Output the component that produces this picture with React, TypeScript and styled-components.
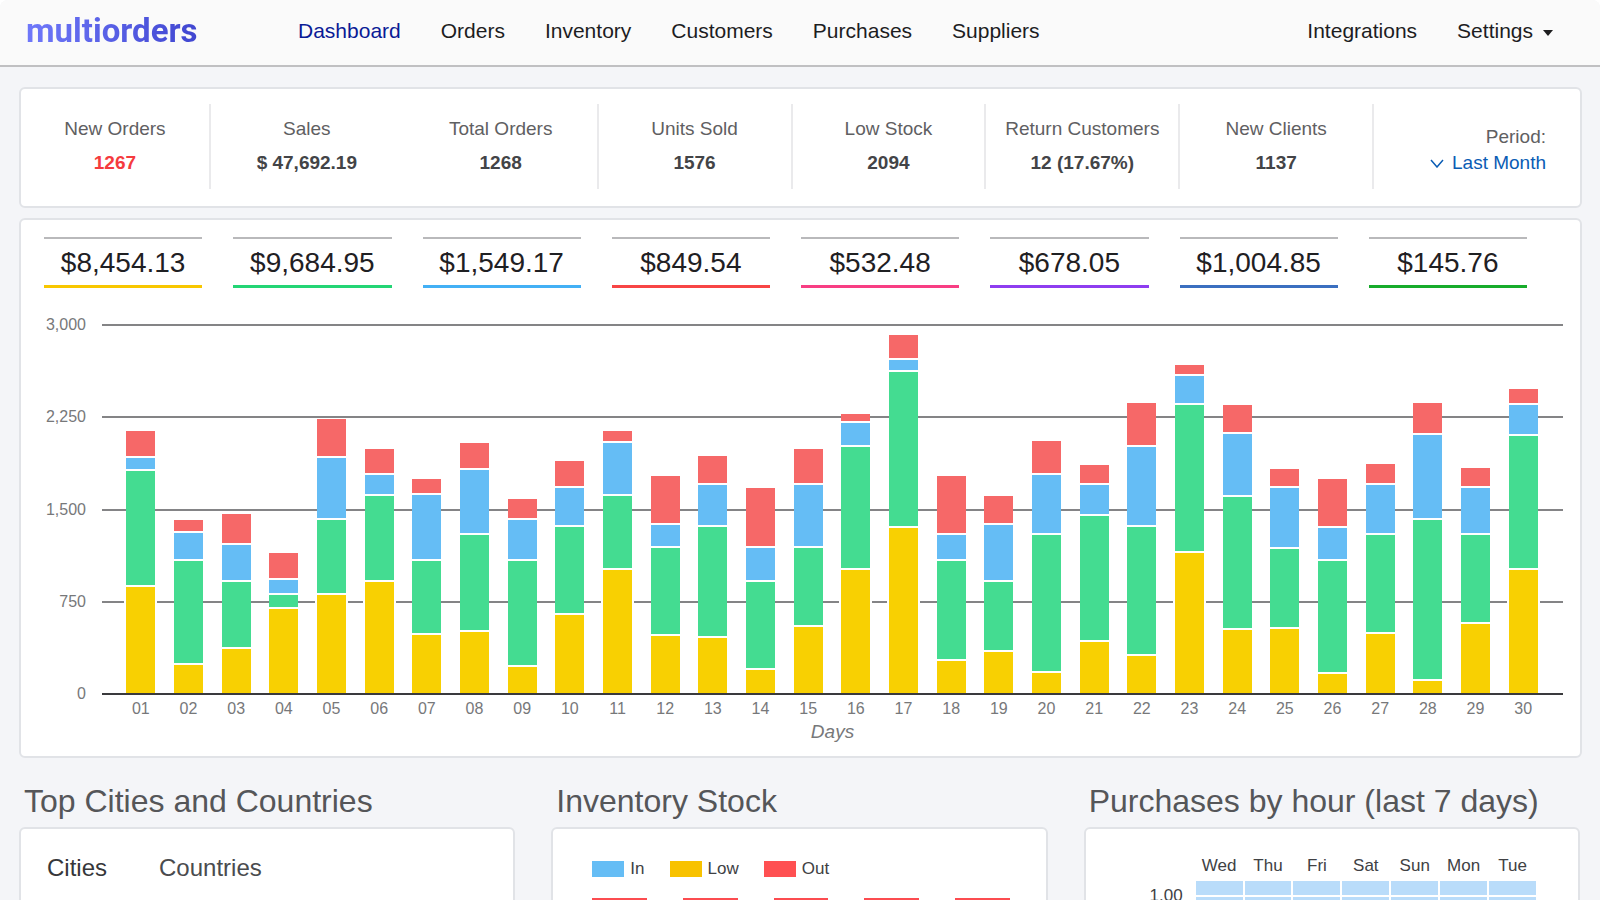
import React from "react";
import styled, { createGlobalStyle } from "styled-components";

const COLORS = {
  yellow: "#f8d002",
  green: "#44dc91",
  blue: "#65bdf5",
  red: "#f66868",
};

const GlobalStyle = createGlobalStyle`
  *, *::before, *::after { box-sizing: border-box; }
  html { background: #ffffff; }
  body {
    margin: 0;
    font-family: "Liberation Sans", Arial, Helvetica, sans-serif;
    color: #404144;
  }
  button, select { font: inherit; color: inherit; background: none; border: 0; padding: 0; margin: 0; cursor: pointer; }
  a { color: inherit; text-decoration: none; }
`;

const Page = styled.div`
  height: 100vh;
  overflow: hidden;
  background: #f4f5f8;
  border-radius: 8px 8px 0 0;
`;

const Header = styled.header`
  display: flex;
  align-items: center;
  height: 67px;
  padding: 0 47px 4px 26px;
  background: #fafafa;
  border-bottom: 2px solid #c0c0c2;
`;

const Logo = styled.a`
  flex: 0 0 272px;
  font: 700 33px/40px Roboto, sans-serif;
  span {
    background: linear-gradient(90deg, #6f78fa, #4046d0);
    background-clip: text;
    -webkit-background-clip: text;
    color: transparent;
  }
`;

const Nav = styled.nav<{ $end?: boolean }>`
  display: flex;
  align-items: center;
  gap: 40px;
  margin-left: ${(p) => (p.$end ? "auto" : "0")};
  font-size: 21px;
  line-height: 24px;
`;

const NavLink = styled.a<{ $active?: boolean }>`
  color: ${(p) => (p.$active ? "#0a1a96" : "#1d1d1f")};
`;

const NavButton = styled.button`
  display: flex;
  align-items: center;
  gap: 10px;
  color: #1d1d1f;
  svg { margin-top: 4px; }
`;

const Main = styled.main`
  padding: 20px 18px 0 19px;
`;

const Card = styled.section`
  background: #ffffff;
  border: 2px solid #e1e3e7;
  border-radius: 6px;
`;

const StatsCard = styled(Card)`
  display: grid;
  grid-template-columns: 190fr repeat(6, 194fr) 206fr;
  padding: 15px 0 17px;
`;

const Stat = styled.div<{ $divided?: boolean }>`
  display: flex;
  flex-direction: column;
  align-items: center;
  gap: 10px;
  height: 85px;
  padding-top: 13px;
  border-right: 2px solid ${(p) => (p.$divided ? "#eaeaec" : "transparent")};
  white-space: nowrap;
`;

const StatLabel = styled.span`
  font-size: 19px;
  line-height: 24px;
  color: #5f6062;
`;

const StatValue = styled.strong<{ $alert?: boolean }>`
  font-size: 19px;
  line-height: 24px;
  color: ${(p) => (p.$alert ? "#f53b3e" : "#434447")};
`;

const Period = styled.div`
  display: flex;
  flex-direction: column;
  align-items: flex-end;
  gap: 2px;
  padding: 21px 34px 0 0;
  font-size: 19px;
  line-height: 24px;
  label { color: #5f6062; }
`;

const PeriodPicker = styled.div`
  display: flex;
  align-items: center;
  gap: 8px;
  color: #0a5cb4;
  select { appearance: none; outline: 0; }
`;

const ChartCard = styled(Card)`
  margin-top: 10px;
  padding: 17px 17px 12px 23px;
`;

const Totals = styled.div`
  display: grid;
  grid-template-columns: repeat(8, 1fr);
  gap: 31px;
  padding-right: 36px;
`;

const Total = styled.div<{ $color: string }>`
  padding-top: 2px;
  border-top: 2px solid #b9b9bb;
  border-bottom: 3px solid ${(p) => p.$color};
  font-size: 28px;
  line-height: 44px;
  text-align: center;
  color: #1f2023;
`;

const Chart = styled.div`
  display: grid;
  grid-template-columns: 42px 1fr;
  column-gap: 16px;
  margin-top: 36px;
  font-size: 16px;
  line-height: 20px;
  color: #77787a;
`;

const ScaleY = styled.div`
  display: flex;
  flex-direction: column;
  justify-content: space-between;
  margin: -9px 0;
  text-align: right;
`;

const Plot = styled.div`
  display: grid;
  height: 371px;
  > * { grid-area: 1 / 1; }
`;

const GridLines = styled.div`
  display: flex;
  flex-direction: column;
  justify-content: space-between;
  > i { height: 2px; background: #848486; }
`;

const Columns = styled.div`
  display: grid;
  grid-template-columns: repeat(30, 1fr);
  align-items: end;
  justify-items: center;
  padding: 0 16px 0 15px;
`;

const Bars = styled(Columns)`
  border-bottom: 2px solid #3a3a3d;
`;

const Bar = styled.div`
  width: 29px;
  display: flex;
  flex-direction: column-reverse;
`;

const Segment = styled.div<{ $color: string; $halo?: boolean }>`
  background: ${(p) => p.$color};
  box-shadow: ${(p) => (p.$halo ? "-2px 0 #ffffff, 2px 0 #ffffff" : "none")};
`;

const Seam = styled.div`
  height: 2px;
  background: #ffffff;
`;

const ScaleX = styled(Columns)`
  grid-column: 2;
  padding-top: 4px;
`;

const AxisTitle = styled.div`
  grid-column: 2;
  margin-top: 1px;
  font-size: 19px;
  line-height: 24px;
  font-style: italic;
  text-align: center;
`;

const Panels = styled.div`
  display: grid;
  grid-template-columns: repeat(3, 1fr);
  gap: 36px;
  margin: 25px 2px 0 0;
`;

const PanelTitle = styled.h2`
  margin: 0 0 8px 5px;
  font-size: 32px;
  line-height: 36px;
  font-weight: 400;
  color: #555659;
  white-space: nowrap;
`;

const PanelCard = styled(Card)`
  min-height: 220px;
`;

const Tabs = styled.div`
  display: flex;
  gap: 52px;
  padding: 25px 26px;
`;

const Tab = styled.button<{ $active?: boolean }>`
  font-size: 24px;
  line-height: 28px;
  color: ${(p) => (p.$active ? "#36373a" : "#4a4b4e")};
`;

const Legend = styled.div`
  display: flex;
  gap: 25px;
  padding: 30px 39px 0;
  font-size: 17px;
  line-height: 20px;
`;

const LegendItem = styled.span<{ $color: string }>`
  display: flex;
  align-items: center;
  gap: 6px;
  &::before {
    content: "";
    width: 32px;
    height: 16px;
    background: ${(p) => p.$color};
  }
`;

const StockBars = styled.div`
  display: grid;
  grid-template-columns: repeat(5, 1fr);
  gap: 36px;
  padding: 19px 36px 0 39px;
  > i { height: 120px; background: #fc4c50; }
`;

const HeatMap = styled.table`
  width: calc(100% - 88px);
  margin: 25px 0 0 48px;
  table-layout: fixed;
  border-spacing: 2px;
  border-collapse: separate;
  font-size: 17px;
  line-height: 20px;
  th { padding: 0; font-weight: 400; }
  thead th { padding-bottom: 3px; }
  thead th:first-child { width: 58px; }
  tbody th { text-align: right; padding-right: 11px; vertical-align: middle; }
  td { height: 14px; padding: 0; background: #b9dcfa; }
`;

const stats = [
  { label: "New Orders", value: "1267", alert: true, divided: true },
  { label: "Sales", value: "$ 47,692.19" },
  { label: "Total Orders", value: "1268", divided: true },
  { label: "Units Sold", value: "1576", divided: true },
  { label: "Low Stock", value: "2094", divided: true },
  { label: "Return Customers", value: "12 (17.67%)", divided: true },
  { label: "New Clients", value: "1137", divided: true },
];

const totals = [
  ["$8,454.13", "#f8c700"],
  ["$9,684.95", "#23d575"],
  ["$1,549.17", "#43b0f5"],
  ["$849.54", "#f84545"],
  ["$532.48", "#f83e83"],
  ["$678.05", "#8e3df0"],
  ["$1,004.85", "#3b6fc0"],
  ["$145.76", "#17ac2b"],
];

// Top edge of each stacked part, in pixels above the centre of the axis line.
const days = [
  [107, 223, 236, 263], [29, 133, 161, 174], [45, 112, 149, 180],
  [85, 99, 114, 141], [99, 174, 236, 275], [112, 198, 219, 245],
  [59, 133, 199, 215], [62, 159, 224, 251], [27, 133, 174, 195],
  [79, 167, 206, 233], [124, 198, 251, 263], [58, 146, 169, 218],
  [56, 167, 209, 238], [24, 112, 146, 206], [67, 146, 209, 245],
  [124, 247, 271, 280], [166, 322, 334, 359], [33, 133, 159, 218],
  [42, 112, 169, 198], [21, 159, 219, 253], [52, 178, 209, 229],
  [38, 167, 247, 291], [141, 289, 318, 329], [64, 197, 260, 289],
  [65, 145, 206, 225], [20, 133, 166, 215], [60, 159, 209, 230],
  [13, 174, 259, 291], [70, 159, 206, 226], [124, 258, 289, 305],
];

const partColors = [COLORS.yellow, COLORS.green, COLORS.blue, COLORS.red];
const SEAM = 2;
const AXIS_HALF = 1;

function StackedBar({ levels }: { levels: number[] }) {
  return (
    <Bar>
      {levels.map((top, i) => {
        const bottom = i === 0 ? AXIS_HALF : levels[i - 1] + SEAM;
        return (
          <React.Fragment key={i}>
            {i > 0 && <Seam />}
            <Segment
              $color={partColors[i]}
              $halo={i === 0}
              style={{ height: top - bottom }}
            />
          </React.Fragment>
        );
      })}
    </Bar>
  );
}

const weekdays = ["Wed", "Thu", "Fri", "Sat", "Sun", "Mon", "Tue"];

export default function App() {
  return (
    <Page>
      <GlobalStyle />
      <Header>
        <Logo href="#"><span>multiorders</span></Logo>
        <Nav>
          <NavLink href="#" $active>Dashboard</NavLink>
          <NavLink href="#">Orders</NavLink>
          <NavLink href="#">Inventory</NavLink>
          <NavLink href="#">Customers</NavLink>
          <NavLink href="#">Purchases</NavLink>
          <NavLink href="#">Suppliers</NavLink>
        </Nav>
        <Nav $end>
          <NavLink href="#">Integrations</NavLink>
          <NavButton type="button">
            Settings
            <svg width="10" height="6" viewBox="0 0 10 6" aria-hidden="true">
              <path d="M0 0h10L5 6z" fill="#1d1d1f" />
            </svg>
          </NavButton>
        </Nav>
      </Header>

      <Main>
        <StatsCard>
          {stats.map((s) => (
            <Stat key={s.label} $divided={s.divided}>
              <StatLabel>{s.label}</StatLabel>
              <StatValue $alert={s.alert}>{s.value}</StatValue>
            </Stat>
          ))}
          <Period>
            <label htmlFor="period">Period:</label>
            <PeriodPicker>
              <svg width="14" height="9" viewBox="0 0 14 9" aria-hidden="true">
                <path d="M1 1l6 7 6-7" fill="none" stroke="currentColor" strokeWidth="1.5" />
              </svg>
              <select id="period">
                <option>Last Month</option>
              </select>
            </PeriodPicker>
          </Period>
        </StatsCard>

        <ChartCard>
          <Totals>
            {totals.map(([amount, color]) => (
              <Total key={amount} $color={color}>{amount}</Total>
            ))}
          </Totals>
          <Chart>
            <ScaleY>
              {["3,000", "2,250", "1,500", "750", "0"].map((v) => (
                <span key={v}>{v}</span>
              ))}
            </ScaleY>
            <Plot>
              <GridLines>
                <i /><i /><i /><i /><i />
              </GridLines>
              <Bars>
                {days.map((levels, i) => (
                  <StackedBar key={i} levels={levels} />
                ))}
              </Bars>
            </Plot>
            <ScaleX>
              {days.map((_, i) => (
                <span key={i}>{String(i + 1).padStart(2, "0")}</span>
              ))}
            </ScaleX>
            <AxisTitle>Days</AxisTitle>
          </Chart>
        </ChartCard>

        <Panels>
          <div>
            <PanelTitle>Top Cities and Countries</PanelTitle>
            <PanelCard>
              <Tabs>
                <Tab type="button" $active>Cities</Tab>
                <Tab type="button">Countries</Tab>
              </Tabs>
            </PanelCard>
          </div>
          <div>
            <PanelTitle>Inventory Stock</PanelTitle>
            <PanelCard>
              <Legend>
                <LegendItem $color="#65bdf5">In</LegendItem>
                <LegendItem $color="#f8c200">Low</LegendItem>
                <LegendItem $color="#ff5052">Out</LegendItem>
              </Legend>
              <StockBars>
                <i /><i /><i /><i /><i />
              </StockBars>
            </PanelCard>
          </div>
          <div>
            <PanelTitle>Purchases by hour (last 7 days)</PanelTitle>
            <PanelCard>
              <HeatMap>
                <thead>
                  <tr>
                    <th />
                    {weekdays.map((d) => <th key={d} scope="col">{d}</th>)}
                  </tr>
                </thead>
                <tbody>
                  <tr>
                    <th scope="row" rowSpan={2}>1.00</th>
                    {weekdays.map((d) => <td key={d} />)}
                  </tr>
                  <tr>{weekdays.map((d) => <td key={d} />)}</tr>
                </tbody>
              </HeatMap>
            </PanelCard>
          </div>
        </Panels>
      </Main>
    </Page>
  );
}
